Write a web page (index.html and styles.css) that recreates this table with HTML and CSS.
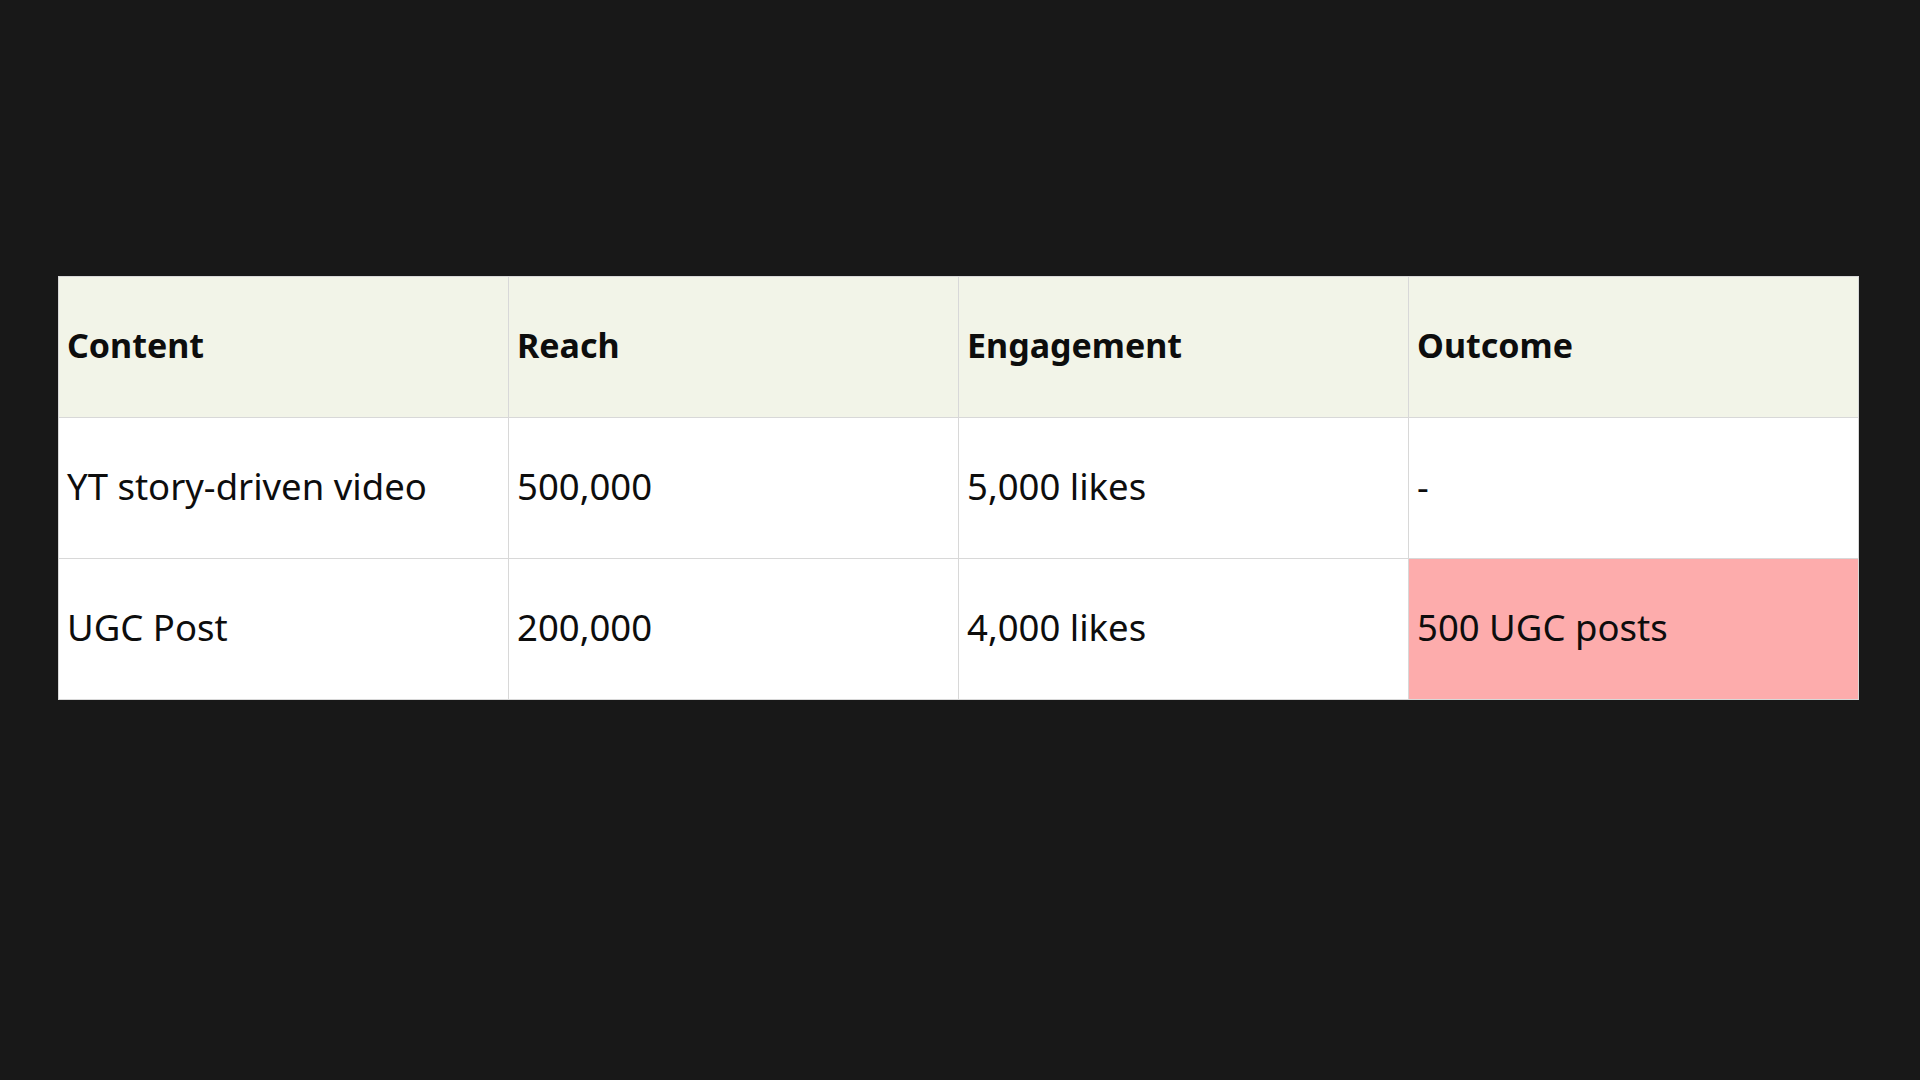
FILE: index.html
```html
<!DOCTYPE html>
<html lang="en">
<head>
<meta charset="utf-8">
<title>Content performance</title>
<link rel="stylesheet" href="styles.css">
</head>
<body>
<main class="page">
  <table class="results">
    <thead>
      <tr class="head-row">
        <th>Content</th>
        <th>Reach</th>
        <th>Engagement</th>
        <th>Outcome</th>
      </tr>
    </thead>
    <tbody>
      <tr>
        <td>YT story-driven video</td>
        <td>500,000</td>
        <td>5,000 likes</td>
        <td>-</td>
      </tr>
      <tr>
        <td>UGC Post</td>
        <td>200,000</td>
        <td>4,000 likes</td>
        <td class="highlight">500 UGC posts</td>
      </tr>
    </tbody>
  </table>
</main>
</body>
</html>
```
FILE: styles.css
```css
html, body {
  margin: 0;
  padding: 0;
  background: #181818;
  width: 1920px;
  height: 1080px;
}

.page {
  padding: 276px 0 0 58px;
}

.results {
  border-collapse: collapse;
  table-layout: fixed;
  width: 1801px;
  font-family: "Noto Sans", "Open Sans", sans-serif;
  font-size: 36.5px;
  color: #0d0d0d;
}

.results th,
.results td {
  height: 135px;
  padding: 0 8px 5px 8px;
  border: 1px solid #d8d8d8;
  text-align: left;
  vertical-align: middle;
  background: #ffffff;
  white-space: nowrap;
}

.results th {
  font-size: 34px;
  font-weight: 700;
  background: #f2f4e8;
}

.results .highlight {
  background: #fdacac;
}
```
